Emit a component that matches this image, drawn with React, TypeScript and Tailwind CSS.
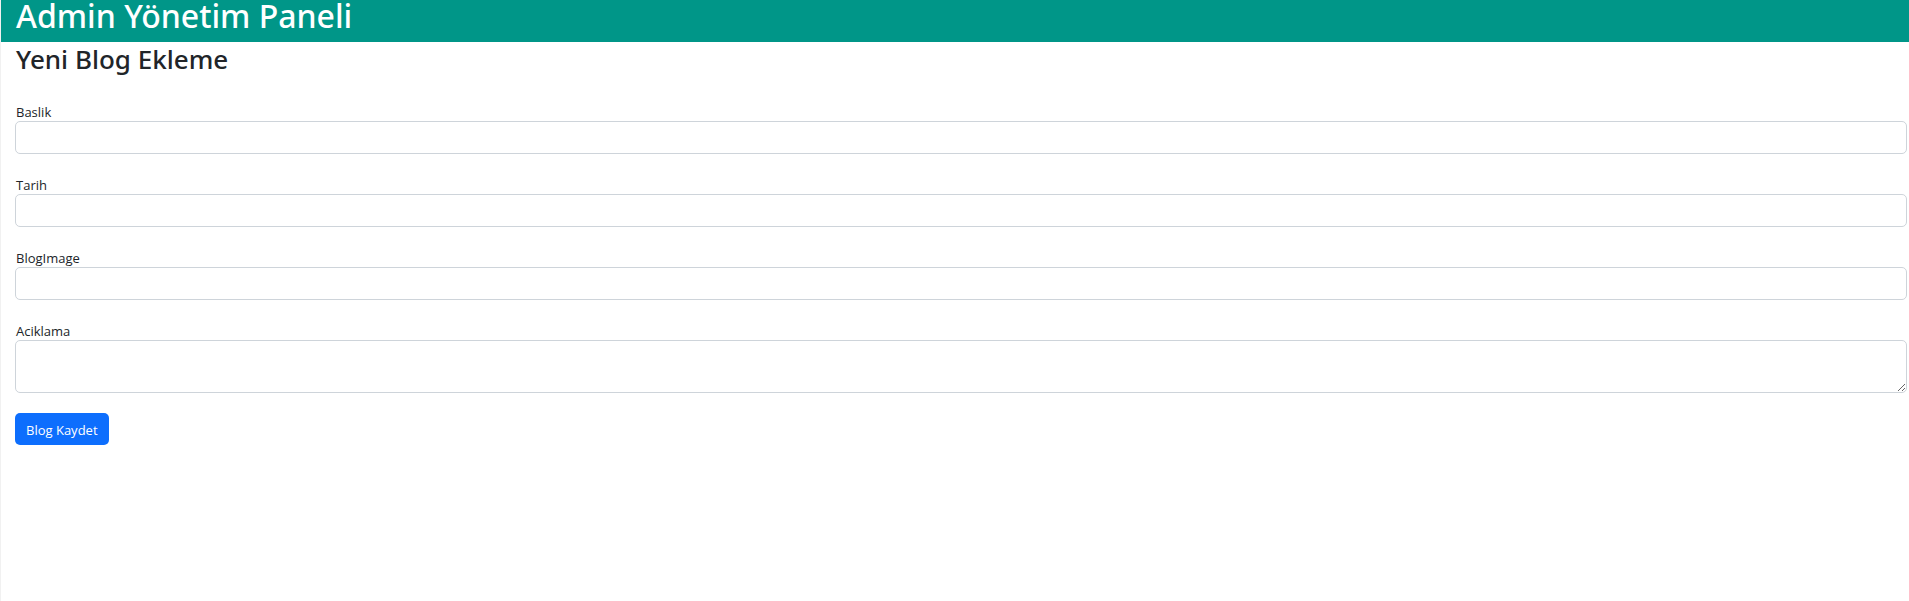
import type { ReactNode } from "react";

const control =
  "block w-full rounded-[5px] border border-[#ced4da] bg-white px-3 text-sm text-[#212529] outline-none focus:border-[#86b7fe]";

function Field({ id, label, children }: { id: string; label: string; children: ReactNode }) {
  return (
    <div>
      <label htmlFor={id} className="block pt-1 pl-px text-[13px] leading-[17px]">
        {label}
      </label>
      {children}
    </div>
  );
}

const textFields = ["Baslik", "Tarih", "BlogImage"];

export default function App() {
  return (
    <div className="min-h-screen border-l border-[#f1f1f1] bg-white font-['Open_Sans',sans-serif] text-[#212529]">
      <header className="bg-[#009688] px-[15px] pb-2.5">
        <h1 className="font-['Noto_Sans',sans-serif] text-[32px] leading-8 font-medium text-white">
          Admin Yönetim Paneli
        </h1>
      </header>
      <main className="pr-0.5 pl-3.5">
        <h2 className="pl-px font-['Noto_Sans',sans-serif] text-[26px] leading-[34px] font-medium">
          Yeni Blog Ekleme
        </h2>
        <form className="mt-6" onSubmit={(event) => event.preventDefault()}>
          <div className="flex flex-col gap-[19px]">
            {textFields.map((name) => (
              <Field key={name} id={name} label={name}>
                <input id={name} name={name} type="text" className={`${control} h-[33px]`} />
              </Field>
            ))}
            <Field id="Aciklama" label="Aciklama">
              <textarea id="Aciklama" name="Aciklama" className={`${control} h-[53px] resize-y py-1.5`} />
            </Field>
          </div>
          <button
            type="submit"
            className="mt-5 h-8 rounded-[5px] bg-[#0d6efd] px-[11px] pt-0.5 text-[13px] leading-5 text-white hover:bg-[#0b5ed7]"
          >
            Blog Kaydet
          </button>
        </form>
      </main>
    </div>
  );
}
